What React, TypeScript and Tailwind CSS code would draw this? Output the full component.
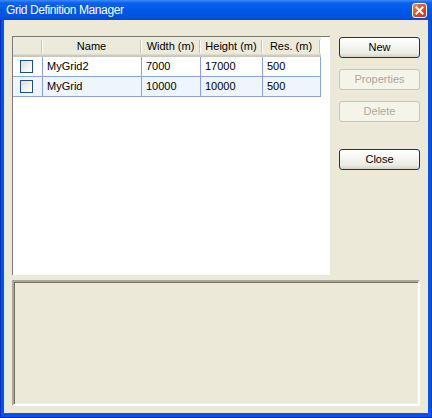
import React from 'react';

interface GridDef {
  readonly name: string;
  readonly width: number;
  readonly height: number;
  readonly res: number;
}

const grids: GridDef[] = [
  { name: 'MyGrid2', width: 7000, height: 17000, res: 500 },
  { name: 'MyGrid', width: 10000, height: 10000, res: 500 },
];

const columns = [
  { label: '', width: 'w-[30px]' },
  { label: 'Name', width: 'w-[99px]' },
  { label: 'Width (m)', width: 'w-[59px]' },
  { label: 'Height (m)', width: 'w-[62px]' },
  { label: 'Res. (m)', width: 'w-[58px]' },
];

function CheckBox() {
  return (
    <div className="h-[13px] w-[13px] border border-[#1c5180] bg-[linear-gradient(135deg,#dcdcd7_0%,#f3f3ef_60%,#ffffff_100%)]" />
  );
}

function XpButton({ label, disabled }: { label: string; disabled?: boolean }) {
  return (
    <div
      className={`flex h-[21px] w-[81px] items-center justify-center rounded-[3px] border ${
        disabled
          ? 'border-[#c9c7ba] bg-[#f5f4ea] text-[#aca899]'
          : 'border-[#003c74] bg-[linear-gradient(to_bottom,#ffffff_0%,#f5f5f0_45%,#ecebe6_80%,#d6d0c5_100%)] text-black'
      }`}
    >
      {label}
    </div>
  );
}

export default function App() {
  return (
    <div className="flex h-[418px] w-[432px] flex-col bg-[#0055ea] font-['Liberation_Sans',Arial,sans-serif] text-[11px] text-black shadow-[inset_1px_0_0_#0030c0,inset_-1px_0_0_#0030c0,inset_0_-1px_0_#0025a8]">
      {/* Title bar */}
      <div className="flex h-[20px] items-center justify-between bg-[linear-gradient(to_bottom,#3d8bf7_0px,#0a62ec_3px,#0058e8_10px,#0052de_17px,#0049d0_20px)] pl-[6px] pr-[5px]">
        <span className="text-[12px] tracking-[-0.4px] text-white">Grid Definition Manager</span>
        <div className="flex h-[15px] w-[15px] items-center justify-center rounded-[3px] border border-white bg-[linear-gradient(135deg,#f08a65_0%,#e2532b_45%,#c2351a_100%)]">
          <svg width="9" height="9" viewBox="0 0 9 9">
            <path d="M1.5 1.5 L7.5 7.5 M7.5 1.5 L1.5 7.5" stroke="#ffffff" strokeWidth="2" strokeLinecap="square" />
          </svg>
        </div>
      </div>

      {/* Client area */}
      <div className="mx-[4px] mb-[5px] flex flex-1 flex-col bg-[#ece9d8] px-[8px] pt-[16px]">
        <div className="flex">
          {/* Grid list */}
          <div className="flex h-[239px] w-[320px] flex-col border-l border-t border-l-[#7a7a7a] border-t-[#7a7a7a] bg-white">
            <div className="flex h-[20px]">
              {columns.map((col, i) => (
                <div
                  key={i}
                  className={`flex ${col.width} items-center bg-[linear-gradient(to_bottom,#ebeadb_0px,#ebeadb_17px,#e2e2da_17px,#d6d2c2_18px,#cbc7b8_19px)]`}
                >
                  <span className="flex-1 pb-[1px] text-center">{col.label}</span>
                  <div className="mb-[2px] h-[13px] w-[1px] bg-[#c7c5b2]" />
                  <div className="mb-[2px] h-[13px] w-[1px] bg-white" />
                </div>
              ))}
              <div className="flex-1 bg-white" />
            </div>

            {grids.map((g, r) => (
              <div key={g.name} className={`flex h-[20px] ${r % 2 ? 'bg-[#eef5fd]' : 'bg-white'}`}>
                <div className="flex w-[308px] border-b border-[#8aa2e6]">
                  <div className="flex w-[30px] items-center justify-center border-r border-[#8aa2e6] pr-[2px]">
                    <CheckBox />
                  </div>
                  <div className="flex w-[99px] items-center border-r border-[#8aa2e6] pl-[4px]">{g.name}</div>
                  <div className="flex w-[59px] items-center border-r border-[#8aa2e6] pl-[4px]">{g.width}</div>
                  <div className="flex w-[62px] items-center border-r border-[#8aa2e6] pl-[4px]">{g.height}</div>
                  <div className="flex w-[58px] items-center border-r border-[#8aa2e6] pl-[4px]">{g.res}</div>
                </div>
                <div className="flex-1 bg-white" />
              </div>
            ))}
          </div>

          {/* Action buttons */}
          <div className="ml-[9px] mt-[1px] flex flex-col">
            <XpButton label="New" />
            <div className="mt-[11px]">
              <XpButton label="Properties" disabled />
            </div>
            <div className="mt-[11px]">
              <XpButton label="Delete" disabled />
            </div>
            <div className="mt-[27px]">
              <XpButton label="Close" />
            </div>
          </div>
        </div>

        {/* Details panel */}
        <div className="mt-[5px] h-[126px] w-[408px] border-2 border-b-white border-l-[#aca899] border-r-white border-t-[#aca899] shadow-[inset_1px_1px_0_#716f64,inset_-1px_-1px_0_#f1efe2]" />
      </div>
    </div>
  );
}
